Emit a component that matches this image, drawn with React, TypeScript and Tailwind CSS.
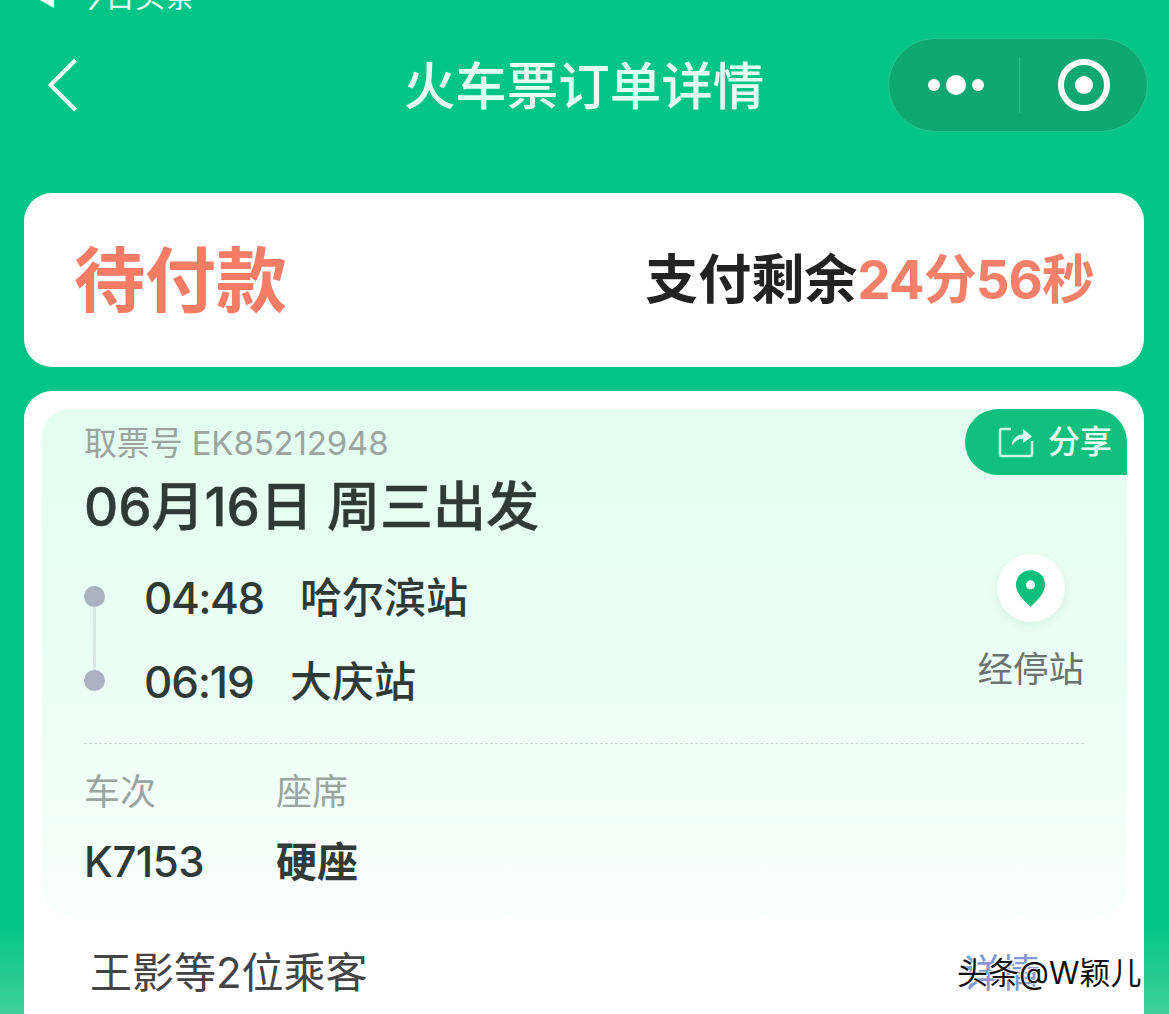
const sans = "font-['Inter','Noto_Sans_CJK_SC',sans-serif]"

function BackIcon() {
    return (
        <svg width="30" height="54" viewBox="0 0 30 54" fill="none">
            <path d="M27.5 2 2.5 27l25 25" stroke="#f2fffa" strokeWidth="4" />
        </svg>
    )
}

function ShareIcon() {
    return (
        <svg width="36" height="32" viewBox="0 0 36 32" fill="none">
            <path d="M13 3H4a2 2 0 0 0-2 2v23a2 2 0 0 0 2 2h28a2 2 0 0 0 2-2V15" stroke="#c9f5e2" strokeWidth="2.500" />
            <path d="M14 19c0-5 4-10 11-10.500V3l9 7.500-9 6.500v-4c-5 0-8 2-11 6z" fill="#e6fff5" />
        </svg>
    )
}

function PinIcon() {
    return (
        <svg width="31" height="39" viewBox="0 0 34 42">
            <path d="M17 1C8 1 1 8 1 17c0 9 9 18 16 24 7-6 16-15 16-24C33 8 26 1 17 1z" fill="#0cc07c" />
            <circle cx="17" cy="17" r="5" fill="#ffffff" />
        </svg>
    )
}

export default function App() {
    return (
        <div className={`${sans} w-full h-[1014px] overflow-hidden bg-[linear-gradient(180deg,#03c585_0%,#03c585_91%,#3fd09c_100%)]`}>
            {/* Status bar, cut off by the top edge */}
            <div className="h-[10px] overflow-hidden flex items-end pl-[40px] text-[#e6fff5]">
                <div className="flex items-end gap-[21px]">
                    <span className="w-0 h-0 border-y-[8px] border-y-transparent border-r-[14px] border-r-white mb-[2px]" />
                    <span className="text-[30px] leading-[42px] h-[42px] -mb-[7px]">今日头条</span>
                </div>
            </div>

            {/* Nav */}
            <div className="h-[94px] mt-[28px] mb-[61px] grid grid-cols-[1fr_auto_1fr] items-center pl-[48px] pr-[21px]">
                <BackIcon />
                <h1 className="text-[51.5px] leading-none font-medium text-[#e6fdf4] -ml-[28px] mt-[4px]">火车票订单详情</h1>
                <div className="justify-self-end w-[260px] h-[94px] rounded-full bg-[#10a872] border border-[#2cc48d] flex items-center">
                    <div className="w-[130px] pl-[4px] flex items-center justify-center gap-[6px]">
                        <span className="w-[12px] h-[12px] rounded-full bg-white" />
                        <span className="w-[20px] h-[20px] rounded-full bg-white" />
                        <span className="w-[12px] h-[12px] rounded-full bg-white" />
                    </div>
                    <div className="w-px h-[56px] bg-[#34bd8c]" />
                    <div className="flex-1 flex justify-center">
                        <div className="w-[52px] h-[52px] rounded-full border-[6px] border-white flex items-center justify-center">
                            <span className="w-[18px] h-[18px] rounded-full bg-white" />
                        </div>
                    </div>
                </div>
            </div>

            <div className="pl-[24px] pr-[25px] flex flex-col gap-[24px]">
                {/* Status */}
                <div className="h-[174px] rounded-[28px] bg-white flex items-center justify-between pl-[50px] pr-[50px]">
                    <span className="text-[71px] leading-none font-bold text-[#f67c66]">待付款</span>
                    <div className="text-[53px] leading-none font-bold flex items-center">
                        <span className="text-[#222222]">支付剩余</span>
                        <span className="text-[#f5806a] tracking-[-1px]">24分56秒</span>
                    </div>
                </div>

                {/* Order */}
                <div className="rounded-[28px] bg-white pl-[18px] pr-[17px] pt-[18px] h-[700px]">
                    <div className="relative h-[506px] rounded-[28px] bg-[linear-gradient(180deg,#e4fdf1_0%,#e9fff5_45%,#f8fffc_100%)] pl-[42px] pr-[43px] pt-[15px]">
                        <div className="absolute right-0 top-0 w-[162px] h-[66px] rounded-t-[33px] rounded-bl-[33px] bg-[#10c07c] flex items-center justify-end gap-[14px] pr-[15px] text-[#ecfff7] text-[32px] font-medium">
                            <ShareIcon />
                            <span>分享</span>
                        </div>

                        <div className="text-[33px] leading-[38px] tracking-[-0.15px] text-[#9aa5a0]">取票号 EK85212948</div>
                        <div className="text-[53px] leading-[60px] mt-[15px] font-medium [-webkit-text-stroke:0.4px_#2f3a36] text-[#2f3a36]">06月16日 周三出发</div>

                        <div className="flex mt-[31px] justify-between">
                            <div className="flex">
                                <div className="w-[21px] flex flex-col items-center pt-[18px]">
                                    <span className="w-[21px] h-[21px] rounded-full bg-[#aab2c2] shrink-0" />
                                    <span className="w-[3px] h-[63px] bg-[#dde6e6]" />
                                    <span className="w-[21px] h-[21px] rounded-full bg-[#aab2c2] shrink-0" />
                                </div>
                                <div className="ml-[39px] flex flex-col gap-[24px] text-[#2f3a36] font-medium">
                                    <div className="flex items-center h-[60px]">
                                        <span className="text-[44px] leading-none w-[156px] tracking-[-1.5px]">04:48</span>
                                        <span className="text-[42px] leading-none">哈尔滨站</span>
                                    </div>
                                    <div className="flex items-center h-[60px]">
                                        <span className="text-[44px] leading-none w-[146px] tracking-[-1.2px]">06:19</span>
                                        <span className="text-[42px] leading-none">大庆站</span>
                                    </div>
                                </div>
                            </div>
                            <div className="flex flex-col items-center -mt-[14px]">
                                <div className="w-[68px] h-[68px] rounded-full bg-white shadow-[0_4px_10px_rgba(0,80,50,0.08)] flex items-center justify-center">
                                    <PinIcon />
                                </div>
                                <span className="text-[35.5px] leading-[42px] mt-[27px] text-[#6b7370]">经停站</span>
                            </div>
                        </div>

                        <div className="border-t border-dashed border-[#ccd6d3] mt-[31px]" />

                        <div className="flex gap-[52px] mt-[27px]">
                            <div className="w-[140px] flex flex-col">
                                <span className="text-[36px] leading-[42px] text-[#9aa5a0]">车次</span>
                                <span className="text-[42px] leading-[50px] mt-[24px] font-medium tracking-[-0.5px] text-[#2f3a36]">K7153</span>
                            </div>
                            <div className="flex flex-col">
                                <span className="text-[36px] leading-[42px] text-[#9aa5a0]">座席</span>
                                <span className="text-[41px] leading-[50px] mt-[24px] font-bold text-[#333b38]">硬座</span>
                            </div>
                        </div>
                    </div>

                    {/* Passengers */}
                    <div className="flex items-center justify-between pl-[48px] pr-[87px] mt-[32px] leading-[52px]">
                        <span className="text-[42px] text-[#444444]">王影等2位乘客</span>
                        <span className="text-[39px] text-[#7f9ad0]">详情</span>
                    </div>
                </div>
            </div>

            {/* Watermark */}
            <div className="absolute left-[957px] top-[953px] text-[31px] leading-[40px] text-[#111111] [text-shadow:1px_1px_0_#ffffff,-1px_-1px_0_#ffffff]">头条@W颖儿</div>
        </div>
    )
}
